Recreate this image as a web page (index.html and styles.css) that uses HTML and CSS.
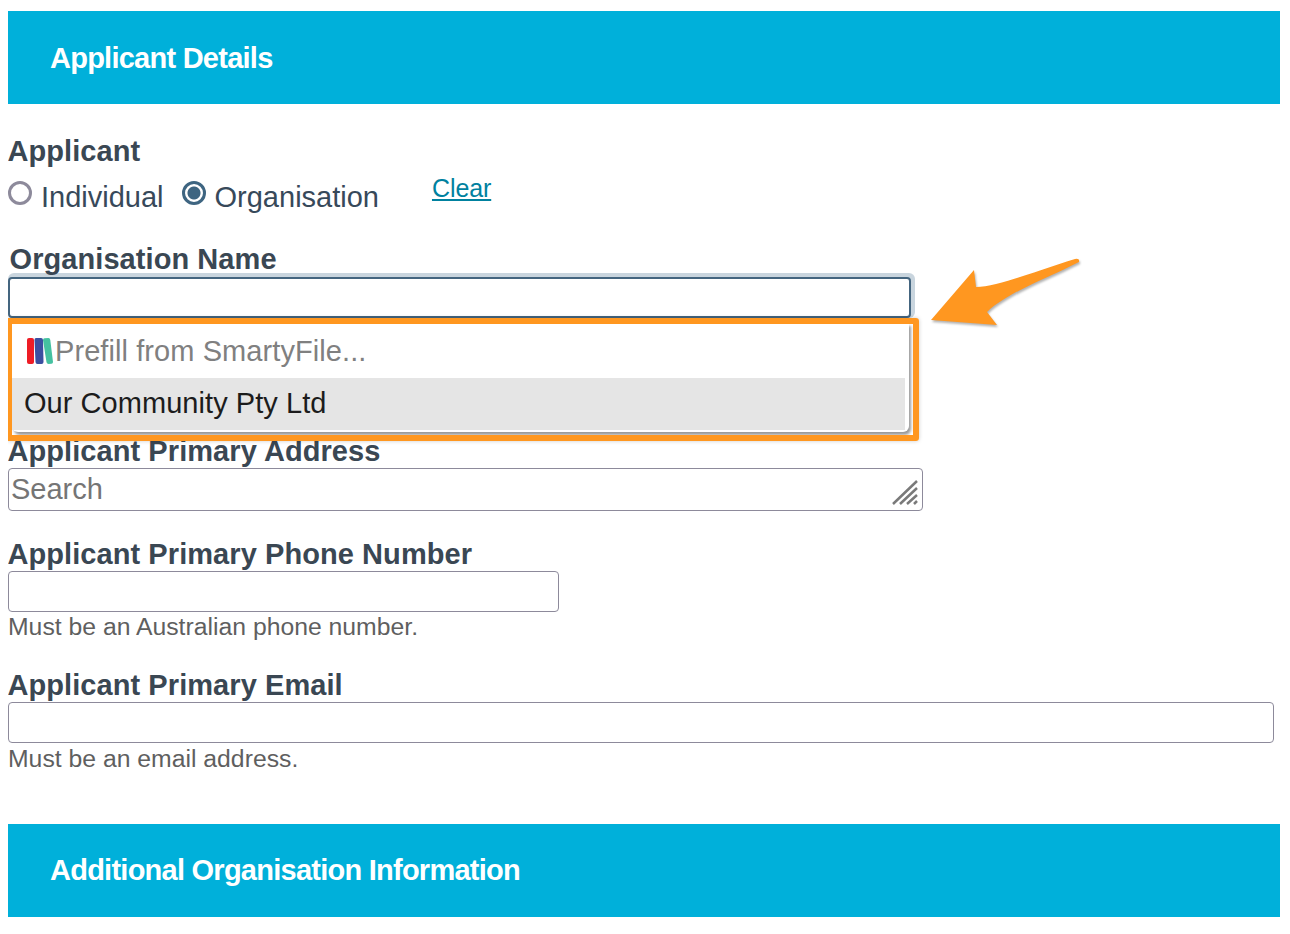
FILE: index.html
```html
<!DOCTYPE html>
<html lang="en">
<head>
    <meta charset="UTF-8">
    <title>Applicant Details</title>
    <link rel="stylesheet" href="styles.css">
</head>
<body>
    <h2 class="section-head">Applicant Details</h2>

    <div class="applicant">
        <div class="label">Applicant</div>
        <div class="radio-row">
            <span class="radio"></span>
            <span class="radio-text radio-text-first">Individual</span>
            <span class="radio radio-on"></span>
            <span class="radio-text">Organisation</span>
            <a class="clear" href="#">Clear</a>
        </div>
    </div>

    <div class="org-field">
        <div class="label label-org">Organisation Name</div>
        <div class="input input-focus"></div>
        <div class="menu">
            <div class="menu-item menu-prefill">
                <svg class="smarty" width="26" height="27" viewBox="0 0 26 27">
                    <rect x="0" y="0" width="7" height="26" rx="2" fill="#ee1c25"/>
                    <path d="M9 0h5q2 0 2 2l.5 22q0 2-2 2h-4q-2 0-2-2L7.500 2q0-2 1.500-2z" fill="#3b4fa0"/>
                    <path d="M17.500.300l4-.3q1.500 0 1.800 2l2.700 22q0 1.500-1.500 1.800l-3 .2q-1.500 0-2-1.800L16 2q0-1.500 1.500-1.700z" fill="#45c1a0"/>
                </svg>
                <span>Prefill from SmartyFile...</span>
            </div>
            <div class="menu-item menu-hover">Our Community Pty Ltd</div>
        </div>
        <div class="callout"></div>
        <svg class="arrow" width="160" height="90" viewBox="0 0 160 90">
            <path d="M3 70L46 20L48 37C70 37 110 20 147 9Q152 8 151 12C120 28 80 42 59 62L69 75Z" fill="#ff9720"/>
        </svg>
    </div>

    <div class="field field-address">
        <div class="label">Applicant Primary Address</div>
        <div class="input input-address">
            <span class="placeholder">Search</span>
            <svg class="grip" width="27" height="27" viewBox="0 0 27 27">
                <path d="M1 24L25 1M8 24L25 8M15 24L25 15M22 24L25 21" stroke="#7a7a7a" stroke-width="2.500" fill="none"/>
            </svg>
        </div>
    </div>

    <div class="field">
        <div class="label">Applicant Primary Phone Number</div>
        <div class="input input-phone"></div>
        <div class="help">Must be an Australian phone number.</div>
    </div>

    <div class="field field-email">
        <div class="label">Applicant Primary Email</div>
        <div class="input input-email"></div>
        <div class="help">Must be an email address.</div>
    </div>

    <h2 class="section-head section-head-second">Additional Organisation Information</h2>
</body>
</html>
```

FILE: styles.css
```css
body {
    margin: 8px;
    font-family: "Liberation Sans", Arial, sans-serif;
    color: #37474f;
    background: #fff;
}
.section-head {
    height: 93px;
    margin: 3px 0 0;
    width: 1272px;
    padding-left: 42px;
    box-sizing: border-box;
    background: #00b0da;
    color: #fff;
    font-size: 29px;
    line-height: 95px;
    font-weight: bold;
    letter-spacing: -0.75px;
}
.section-head-second {
    margin-top: 50px;
    line-height: 93px;
}
.label {
    height: 26px;
    margin-left: -0.5px;
    font-size: 29px;
    line-height: 26px;
    font-weight: bold;
    letter-spacing: 0.07px;
    color: #3a4753;
    white-space: nowrap;
}
.applicant {
    margin-top: 34px;
}
.radio-row {
    display: flex;
    align-items: flex-start;
    height: 44px;
    margin-top: 14px;
    font-size: 29px;
    color: #37495a;
}
.radio {
    width: 24px;
    height: 24px;
    margin-top: 3px;
    box-sizing: border-box;
    border: 3px solid #8d8a9b;
    border-radius: 50%;
    background: #fff;
}
.radio-on {
    border-color: #3e6581;
    background: radial-gradient(circle, #3e6581 0 6px, #fff 7px);
}
.radio-text {
    margin-left: 9px;
    line-height: 38px;
}
.radio-text-first {
    margin-right: 18px;
}
.clear {
    margin-left: 53px;
    font-size: 25px;
    line-height: 21px;
    letter-spacing: -0.1px;
    color: #00819f;
}
.org-field {
    position: relative;
    margin-top: 24px;
    height: 192px;
}
.label-org {
    padding-left: 2px;
}
.input {
    height: 41px;
    box-sizing: border-box;
    border: 1px solid #8d8a9b;
    border-radius: 4px;
    background: #fff;
}
.input-focus {
    width: 903px;
    margin-top: 5px;
    border: 2px solid #44657f;
    box-shadow: 2px -2px 0 2px #c9d5de;
}
.menu {
    position: absolute;
    left: 4px;
    top: 77px;
    width: 897px;
    height: 109px;
    box-sizing: border-box;
    padding-top: 5px;
    background: #fff;
    border-radius: 0 0 6px 6px;
    box-shadow: 2px 3px 3px #999;
    font-size: 29px;
}
.menu-item {
    height: 52px;
    width: 893px;
    display: flex;
    align-items: center;
    padding-left: 12px;
    box-sizing: border-box;
    letter-spacing: 0.05px;
}
.menu-prefill {
    padding: 0 0 4px 15px;
    color: #808080;
    height: 50px;
    letter-spacing: 0.08px;
}
.smarty {
    margin-right: 2px;
}
.menu-hover {
    padding-bottom: 2px;
    background: #e5e5e5;
    color: #1c1c1c;
}
.callout {
    position: absolute;
    left: -2px;
    top: 72px;
    width: 913px;
    height: 123px;
    box-sizing: border-box;
    border: 6px solid #ff9720;
    border-radius: 3px;
    box-shadow: 0 0 4px rgba(0, 0, 0, 0.2);
}
.arrow {
    position: absolute;
    left: 920px;
    top: 4px;
    filter: drop-shadow(1px 2px 1px rgba(0, 0, 0, 0.3));
}
.field {
    margin-top: 30px;
}
.field-address {
    margin-top: 0;
}
.field .label {
    margin-bottom: 4px;
}
.input-address {
    position: relative;
    width: 915px;
    height: 43px;
    padding-left: 2px;
    font-size: 29px;
    line-height: 41px;
}
.placeholder {
    color: #757575;
}
.grip {
    position: absolute;
    right: 3px;
    bottom: 3px;
}
.input-phone {
    width: 551px;
}
.input-email {
    width: 1266px;
}
.help {
    font-size: 24.75px;
    line-height: 30px;
    color: #5f5f5f;
}
.field-email .help {
    margin-top: 1px;
}
```
